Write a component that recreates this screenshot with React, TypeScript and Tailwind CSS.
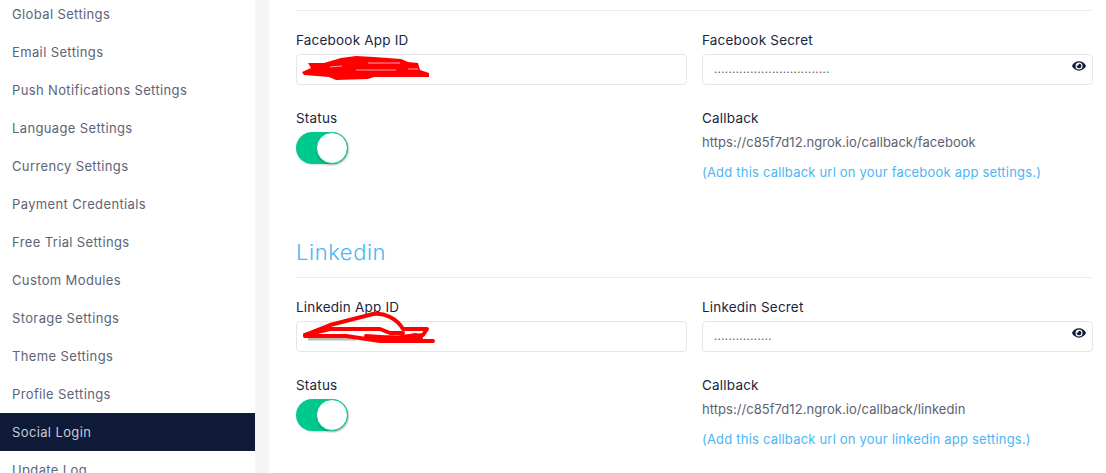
import { FaEye } from "react-icons/fa";

const items = ["Global Settings","Email Settings","Push Notifications Settings","Language Settings","Currency Settings","Payment Credentials","Free Trial Settings","Custom Modules","Storage Settings","Theme Settings","Profile Settings","Social Login","Update Log"];

function Toggle() {
  return (
    <div className="mt-[4px] w-[52px] h-8 rounded-full bg-[#00c98f] flex justify-end shadow-[1px_1px_2px_rgba(0,0,0,0.15)]">
      <div className="w-8 h-8 rounded-full bg-white border border-[#00c98f] shadow-[0_1px_2px_rgba(0,0,0,0.25)]" />
    </div>
  );
}

function Scribble1() {
  return (
    <svg className="absolute -left-px -top-px overflow-visible" width="150" height="30" viewBox="0 0 150 30" fill="none">
      <path d="M12 9 L28 9 L45 4 L60 2 L78 3 L105 5 L112 8 L122 9 L124 16 L133 19 L133 23 L78 23 L72 25 L40 26 L33 23 L8 21 L6 18 L15 14 Z" fill="#ff0000" />
      <path d="M34 13 L46 12 M60 16 L100 16 M72 9 L104 9 M112 15 L122 15" stroke="#ffffff" strokeWidth="0.8" opacity="0.8" />
    </svg>
  );
}

function Scribble2() {
  return (
    <svg className="absolute -left-px -top-px overflow-visible" width="150" height="30" viewBox="0 0 150 30" fill="none">
      <path d="M12 18 L60 18" stroke="#bbbbbb" strokeWidth="3" />
      <path d="M9 14 L34 4 L77 -7 C84 -8 90 -6 94 -4 C100 -1 104 3 107 8 L131 8 L127 14 L100 17" stroke="#ff0000" strokeWidth="4" strokeLinejoin="round" strokeLinecap="round" />
      <path d="M9 14 L17 12 L34 8 L84 8 L94 12 L107 12 M9 15 L50 15 L84 20 L137 20 M70 15 L100 17 L120 14 M84 16 L125 17" stroke="#ff0000" strokeWidth="4" strokeLinejoin="round" strokeLinecap="round" />
    </svg>
  );
}

function Section({ name, dots, url, lower, scribble }: { name: string; dots: string; url: string; lower: string; scribble: React.ReactNode }) {
  return (
    <div className="grid grid-cols-2 gap-x-[15px]">
      <div>
        <div className="text-[13.5px] leading-5 tracking-[0.2px] text-[#1a2540]">{name} App ID</div>
        <div className="relative mt-[4px] h-[31px] rounded border border-[#e4e6ee]">{scribble}</div>
        <div className="mt-[23px] text-[13.5px] leading-5 tracking-[0.2px] text-[#1a2540]">Status</div>
        <Toggle />
      </div>
      <div>
        <div className="text-[13.5px] leading-5 tracking-[0.2px] text-[#1a2540]">{name} Secret</div>
        <div className="mt-[4px] h-[31px] rounded border border-[#e4e6ee] flex items-center justify-between pl-[11px] pr-[6px]">
          <span className="text-[11px] leading-none tracking-[0.45px] text-[#555]">{dots}</span>
          <FaEye className="text-[14px] -mt-2 text-[#101a38]" />
        </div>
        <div className="mt-[23px] text-[13.5px] leading-5 tracking-[0.2px] text-[#1a2540]">Callback</div>
        <div className="mt-[4px] text-[13px] leading-5 tracking-[0.05px] text-[#5c6270]">{url}</div>
        <div className="mt-[10px] text-[13px] leading-5 tracking-[0.2px] text-[#4db5f5]">(Add this callback url on your {lower} app settings.)</div>
      </div>
    </div>
  );
}

export default function App() {
  return (
    <div className="h-[473px] w-[1106px] overflow-hidden flex bg-white font-['Inter','Liberation_Sans',sans-serif]">
      <aside className="w-[255px] shrink-0 -mt-[5px]">
        {items.map((t, i) => (
          <div key={t} className={`h-[38px] flex items-center pl-3 pt-[2px] text-[13px] tracking-[0.37px] ${i === 11 ? "bg-[#0e1a38] text-[#c4ccdc]" : "text-[#5c6478]"}`}>{t}</div>
        ))}
      </aside>
      <div className="w-[14px] shrink-0 bg-[#f5f5f8]" />
      <main className="flex-1 pl-[27px] pr-[13px]">
        <div className="mt-[10px] border-t border-[#eceef2]" />
        <div className="mt-[19px]">
          <Section name="Facebook" dots="................................" url="https://c85f7d12.ngrok.io/callback/facebook" lower="facebook" scribble={<Scribble1 />} />
        </div>
        <h2 className="mt-[55px] text-[22px] leading-[30px] tracking-[0.55px] font-light text-[#4db5f5]">Linkedin</h2>
        <div className="mt-[10px] border-t border-[#eceef2]" />
        <div className="mt-[19px]">
          <Section name="Linkedin" dots="................" url="https://c85f7d12.ngrok.io/callback/linkedin" lower="linkedin" scribble={<Scribble2 />} />
        </div>
      </main>
    </div>
  );
}
